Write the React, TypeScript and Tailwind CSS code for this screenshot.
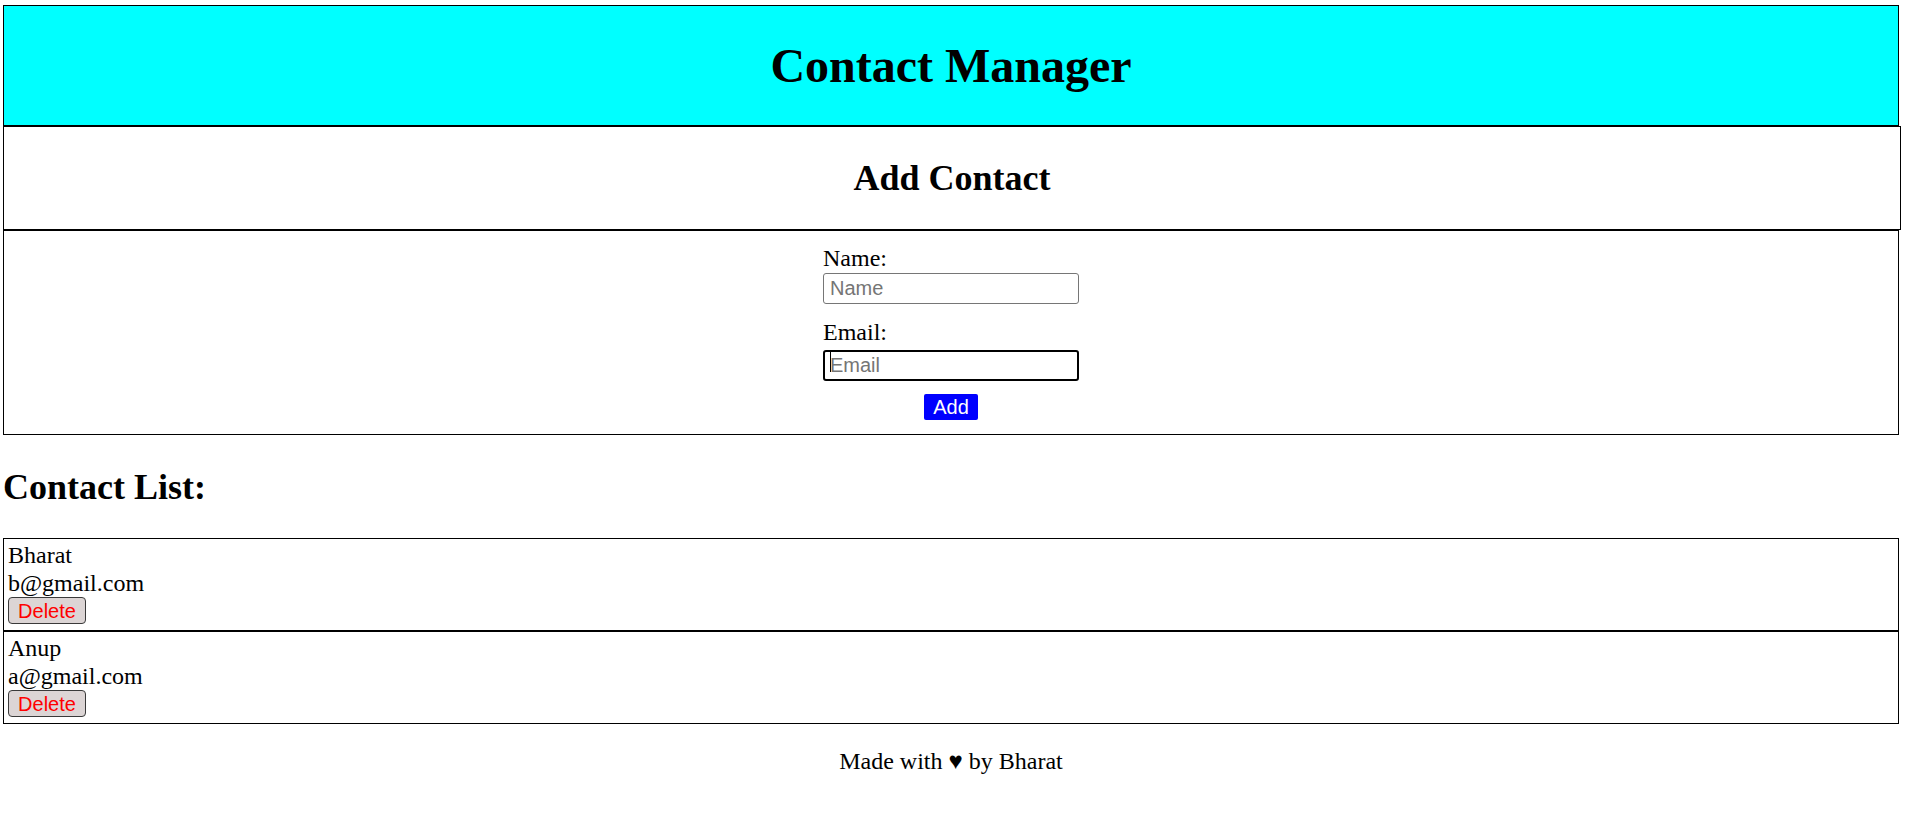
import { useState } from "react";

type Contact = {
  id: number;
  name: string;
  email: string;
};

const initialContacts: Contact[] = [
  { id: 1, name: "Bharat", email: "b@gmail.com" },
  { id: 2, name: "Anup", email: "a@gmail.com" },
];

const ContactCard = ({
  contact,
  onDelete,
}: {
  contact: Contact;
  onDelete: (id: number) => void;
}) => {
  return (
    <div className="flex flex-col items-start border border-black px-[4px] pt-[2px] pb-[6px]">
      <span className="leading-[28px]">{contact.name}</span>
      <span className="leading-[28px]">{contact.email}</span>
      <button
        type="button"
        onClick={() => onDelete(contact.id)}
        className="h-[27px] w-[78px] rounded-[4px] border border-[#3a3a3a] bg-[#dcd5d5] font-['Liberation_Sans',Arial,sans-serif] text-[20px] leading-[22px] text-[#ff0000]"
      >
        Delete
      </button>
    </div>
  );
};

const App = () => {
  const [contacts, setContacts] = useState<Contact[]>(initialContacts);
  const [name, setName] = useState("");
  const [email, setEmail] = useState("");

  const addContact = (e: React.FormEvent) => {
    e.preventDefault();
    if (!name || !email) return;
    setContacts([...contacts, { id: Date.now(), name, email }]);
    setName("");
    setEmail("");
  };

  const deleteContact = (id: number) => {
    setContacts(contacts.filter((c) => c.id !== id));
  };

  return (
    <div className="min-h-[831px] bg-white pl-[3px] pt-[5px] font-['Liberation_Serif','Times_New_Roman',serif] text-[24px] text-black">
      {/* header */}
      <header className="w-[1896px] border border-black bg-[#00ffff]">
        <h1 className="my-[32px] text-center text-[48px] font-bold leading-[55px]">
          Contact Manager
        </h1>
      </header>

      <div className="w-[1898px] border border-black">
        <h2 className="my-[30px] text-center text-[36px] font-bold leading-[42px]">
          Add Contact
        </h2>
      </div>

      <form
        onSubmit={addContact}
        className="w-[1896px] border border-black pt-[13px] pb-[14px]"
      >
        <div className="mx-auto flex w-[256px] flex-col">
          <label className="leading-[28px]">Name:</label>
          <input
            type="text"
            placeholder="Name"
            value={name}
            onChange={(e) => setName(e.target.value)}
            className="mt-px h-[31px] w-[256px] rounded-[3px] border border-[#767676] px-[6px] font-['Liberation_Sans',Arial,sans-serif] text-[20px] outline-none placeholder:text-[#757575]"
          />
          <label className="mt-[14px] leading-[28px]">Email:</label>
          <div className="relative">
            <input
              type="email"
              placeholder="Email"
              value={email}
              onChange={(e) => setEmail(e.target.value)}
              className="h-[31px] w-[256px] rounded-[3px] border-2 border-black px-[5px] font-['Liberation_Sans',Arial,sans-serif] text-[20px] outline-none placeholder:text-[#757575]"
            />
            {email === "" && (
              <span className="absolute left-[7px] top-[5px] h-[21px] w-px bg-black" />
            )}
          </div>
          <button
            type="submit"
            className="mx-auto mt-[12px] h-[26px] w-[54px] rounded-[2px] bg-[#0000ff] font-['Liberation_Sans',Arial,sans-serif] text-[20px] leading-[22px] text-white"
          >
            Add
          </button>
        </div>
      </form>

      <h2 className="mt-[32px] mb-[30px] text-[36px] font-bold leading-[41px]">
        Contact List:
      </h2>

      <div className="flex w-[1896px] flex-col">
        {contacts.map((contact) => (
          <ContactCard
            key={contact.id}
            contact={contact}
            onDelete={deleteContact}
          />
        ))}
      </div>

      <footer className="mt-[23px] w-[1896px] text-center leading-[28px]">
        Made with ♥ by Bharat
      </footer>
    </div>
  );
};

export default App;
